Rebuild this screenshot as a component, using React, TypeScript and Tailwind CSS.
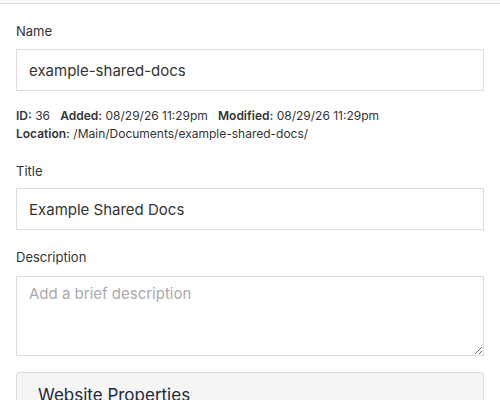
export default function App() {
  return (
    <div className="min-h-[400px] bg-white font-['Inter','Liberation_Sans',sans-serif] text-[#333]">
      <div className="h-[4px] bg-[#f7f7f7] border-b border-[#dedede]" />

      <div className="px-4 pt-[17px]">
        {/* Name */}
        <label className="block text-[13px] leading-5 text-[#333] mb-2">Name</label>
        <input
          type="text"
          defaultValue="example-shared-docs"
          className="block w-full h-[42px] border border-[#dcdcdc] bg-white px-[12px] text-[15px] text-[#333] outline-none"
        />

        <div className="mt-[16px] text-[12px] leading-[18px] text-[#333]">
          <p>
            <span className="font-semibold">ID:</span> 36{"\u00a0\u00a0 "}
            <span className="font-semibold">Added:</span> 08/29/26 11:29pm{"\u00a0\u00a0 "}
            <span className="font-semibold">Modified:</span> 08/29/26 11:29pm
          </p>
          <p>
            <span className="font-semibold">Location:</span> /Main/Documents/example-shared-docs/
          </p>
        </div>

        {/* Title */}
        <label className="block mt-[18px] text-[13px] leading-5 text-[#333] mb-[7px]">Title</label>
        <input
          type="text"
          defaultValue="Example Shared Docs"
          className="block w-full h-[42px] border border-[#dcdcdc] bg-white px-[12px] text-[15px] text-[#333] outline-none"
        />

        {/* Description */}
        <label className="block mt-[17px] text-[13px] leading-5 text-[#333] mb-[9px]">Description</label>
        <textarea
          placeholder="Add a brief description"
          className="block w-full h-[80px] border border-[#dcdcdc] bg-white px-[12px] py-[6px] text-[15px] text-[#333] placeholder:text-[#aaa] outline-none"
        />

        {/* Website Properties */}
        <div className="mt-[16px] rounded-[3px] border border-[#dcdcdc] bg-[#f5f5f5] px-[21px] pt-[10px] pb-4">
          <h3 className="text-[17px] leading-6 text-[#1f2a37]">Website Properties</h3>
        </div>
      </div>
    </div>
  );
}
